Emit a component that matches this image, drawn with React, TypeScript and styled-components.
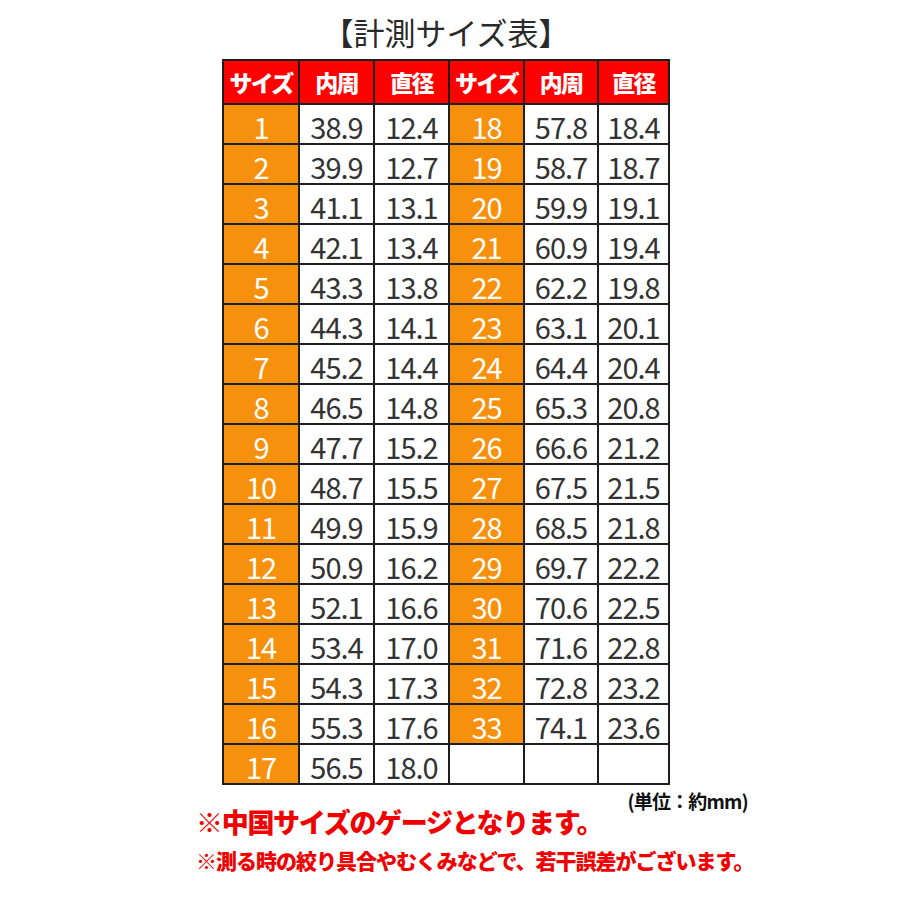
import React from "react";
import styled, { createGlobalStyle } from "styled-components";

const Global = createGlobalStyle`
  html, body { margin: 0; padding: 0; background: #fff; }
  body { font-family: "Noto Sans CJK JP", "Noto Sans", sans-serif; }
`;

const Page = styled.div`
  width: 900px;
  height: 900px;
  display: flex;
  flex-direction: column;
  align-items: flex-start;
  box-sizing: border-box;
  padding-top: 12px;
`;

const Title = styled.h1`
  margin: 0;
  width: 892px;
  text-align: center;
  font-family: "Noto Sans CJK JP", sans-serif;
  font-weight: 400;
  font-size: 31px;
  line-height: 40px;
  color: #2a2a2a;
  height: 47px;
`;

const Table = styled.div`
  margin-left: 222px;
  display: grid;
  grid-template-columns: 74px 73px 73px 73px 72px 69px;
  grid-template-rows: 42px repeat(17, 38px);
  gap: 2px;
  padding: 2px;
  background: #1e1e1e;
`;

const Cell = styled.div<{ $kind: "head" | "size" | "data" | "empty" }>`
  display: flex;
  align-items: center;
  justify-content: center;
  font-family: "Noto Sans CJK JP", sans-serif;
  background: ${(p) =>
    p.$kind === "head" ? "#fe0000" : p.$kind === "size" ? "#f7900d" : "#ffffff"};
  color: ${(p) => (p.$kind === "data" ? "#333333" : "#ffffff")};
  font-size: ${(p) => (p.$kind === "head" ? "23px" : "29px")};
  font-weight: ${(p) => (p.$kind === "head" ? 900 : 400)};
  letter-spacing: ${(p) => (p.$kind === "head" ? "-1.8px" : "-1px")};
  line-height: 1;
  padding-top: ${(p) => (p.$kind === "head" ? "0" : "4px")};
`;

const Notes = styled.div`
  margin-left: 196px;
  width: 562px;
  display: flex;
  flex-direction: column;
`;

const NoteRow = styled.div`
  display: flex;
  justify-content: space-between;
  align-items: flex-start;
`;

const Warning = styled.div`
  margin-top: 21px;
  font-family: "Noto Sans CJK JP", sans-serif;
  font-weight: 900;
  color: #f00000;
  font-size: 27px;
  line-height: 32px;
  letter-spacing: -1.3px;
  white-space: nowrap;
`;

const Unit = styled.div`
  margin-top: 5px;
  font-family: "Noto Sans CJK JP", sans-serif;
  font-weight: 700;
  color: #111;
  font-size: 19px;
  line-height: 22px;
  letter-spacing: -0.8px;
  margin-right: 10px;
  white-space: nowrap;
`;

const SubWarning = styled.div`
  margin-top: 9px;
  font-family: "Noto Sans CJK JP", sans-serif;
  font-weight: 900;
  color: #f00000;
  font-size: 21px;
  line-height: 26px;
  letter-spacing: -1px;
  white-space: nowrap;
`;

const left: [string, string, string][] = [
  ["1", "38.9", "12.4"],
  ["2", "39.9", "12.7"],
  ["3", "41.1", "13.1"],
  ["4", "42.1", "13.4"],
  ["5", "43.3", "13.8"],
  ["6", "44.3", "14.1"],
  ["7", "45.2", "14.4"],
  ["8", "46.5", "14.8"],
  ["9", "47.7", "15.2"],
  ["10", "48.7", "15.5"],
  ["11", "49.9", "15.9"],
  ["12", "50.9", "16.2"],
  ["13", "52.1", "16.6"],
  ["14", "53.4", "17.0"],
  ["15", "54.3", "17.3"],
  ["16", "55.3", "17.6"],
  ["17", "56.5", "18.0"],
];

const right: [string, string, string][] = [
  ["18", "57.8", "18.4"],
  ["19", "58.7", "18.7"],
  ["20", "59.9", "19.1"],
  ["21", "60.9", "19.4"],
  ["22", "62.2", "19.8"],
  ["23", "63.1", "20.1"],
  ["24", "64.4", "20.4"],
  ["25", "65.3", "20.8"],
  ["26", "66.6", "21.2"],
  ["27", "67.5", "21.5"],
  ["28", "68.5", "21.8"],
  ["29", "69.7", "22.2"],
  ["30", "70.6", "22.5"],
  ["31", "71.6", "22.8"],
  ["32", "72.8", "23.2"],
  ["33", "74.1", "23.6"],
];

const headers = ["サイズ", "内周", "直径", "サイズ", "内周", "直径"];

export default function App() {
  return (
    <>
      <Global />
      <Page>
        <Title>【計測サイズ表】</Title>
        <Table>
          {headers.map((h, i) => (
            <Cell key={"h" + i} $kind="head">
              {h}
            </Cell>
          ))}
          {left.map((l, i) => {
            const r = right[i];
            return (
              <React.Fragment key={i}>
                <Cell $kind="size">{l[0]}</Cell>
                <Cell $kind="data">{l[1]}</Cell>
                <Cell $kind="data">{l[2]}</Cell>
                {r ? (
                  <>
                    <Cell $kind="size">{r[0]}</Cell>
                    <Cell $kind="data">{r[1]}</Cell>
                    <Cell $kind="data">{r[2]}</Cell>
                  </>
                ) : (
                  <>
                    <Cell $kind="empty" />
                    <Cell $kind="empty" />
                    <Cell $kind="empty" />
                  </>
                )}
              </React.Fragment>
            );
          })}
        </Table>
        <Notes>
          <NoteRow>
            <Warning>※中国サイズのゲージとなります。</Warning>
            <Unit>(単位：約mm)</Unit>
          </NoteRow>
          <SubWarning>※測る時の絞り具合やむくみなどで、若干誤差がございます。</SubWarning>
        </Notes>
      </Page>
    </>
  );
}
